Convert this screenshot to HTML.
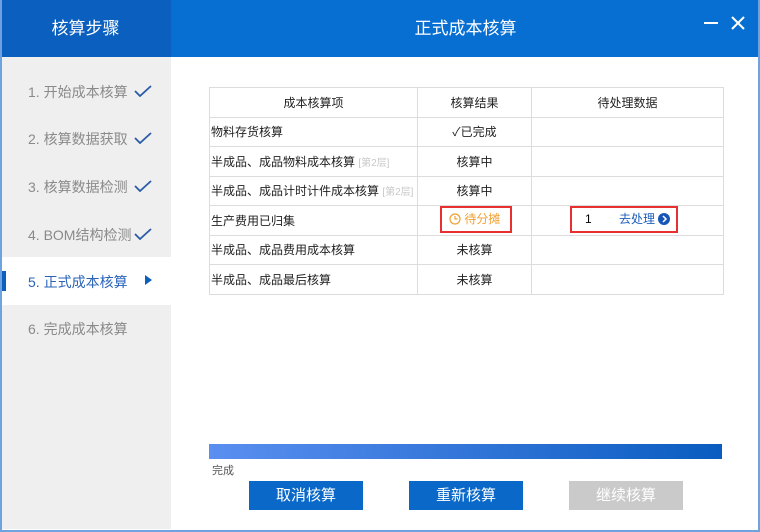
<!DOCTYPE html>
<html><head><meta charset="utf-8"><style>
*{margin:0;padding:0;box-sizing:border-box}
body{width:760px;height:532px;overflow:hidden;background:#fff;font-family:"Liberation Sans","Noto Sans CJK SC",sans-serif;position:relative}
.frame{position:absolute;left:0;top:0;width:760px;height:532px;border:2px solid #6fa3e0;border-top:none}
.hl{position:absolute;left:0;top:0;width:171px;height:57px;background:#0a5fbf;color:#fff;font-size:17px;text-align:center;line-height:57px}
.hr{position:absolute;left:171px;top:0;width:589px;height:57px;background:#086fd2;color:#fff;font-size:17px;text-align:center;line-height:57px}
.side{position:absolute;left:2px;top:57px;width:169px;height:472px;background:#efefef}
.step{position:absolute;left:28px;font-size:14px;color:#8a8a8a;white-space:nowrap}
.ck{position:absolute;left:134px;width:18px;height:12px}
.act{position:absolute;left:2px;top:257px;width:169px;height:48px;background:#fff}
table{position:absolute;left:209px;top:87px;border-collapse:collapse;font-size:12px;color:#222;table-layout:fixed;width:514px}
td{border:1px solid #dcdcdc;height:29.5px;padding:0;white-space:nowrap;overflow:hidden}
td.c{text-align:center}
td.l{padding-left:1px}
.g{color:#c8c8c8;font-size:10px}
.btn{position:absolute;top:481px;width:114px;height:29px;color:#fff;font-size:15px;text-align:center;line-height:29px;background:#0a68c8}
</style></head><body>
<div class="hl">核算步骤</div>
<div class="hr">正式成本核算</div>
<div style="position:absolute;left:704px;top:22px;width:14px;height:2px;background:#fff"></div>
<svg style="position:absolute;left:731px;top:16px" width="14" height="14"><path d="M1 1L13 13M13 1L1 13" stroke="#fff" stroke-width="2"/></svg>
<div class="side"></div>
<div class="act"></div>
<div style="position:absolute;left:2px;top:271px;width:4px;height:20px;background:#0a5fbf"></div>
<div class="step" style="top:82px">1. 开始成本核算</div>
<div class="step" style="top:129px">2. 核算数据获取</div>
<div class="step" style="top:177px">3. 核算数据检测</div>
<div class="step" style="top:225px">4. BOM结构检测</div>
<div class="step" style="top:272px;color:#2a63b8">5. 正式成本核算</div>
<div class="step" style="top:319px">6. 完成成本核算</div>
<svg class="ck" style="top:85px" viewBox="0 0 18 12"><path d="M1 6L6 11L17 1" stroke="#2a5aa8" stroke-width="1.8" fill="none"/></svg>
<svg class="ck" style="top:132px" viewBox="0 0 18 12"><path d="M1 6L6 11L17 1" stroke="#2a5aa8" stroke-width="1.8" fill="none"/></svg>
<svg class="ck" style="top:180px" viewBox="0 0 18 12"><path d="M1 6L6 11L17 1" stroke="#2a5aa8" stroke-width="1.8" fill="none"/></svg>
<svg class="ck" style="top:228px" viewBox="0 0 18 12"><path d="M1 6L6 11L17 1" stroke="#2a5aa8" stroke-width="1.8" fill="none"/></svg>
<svg style="position:absolute;left:145px;top:275px" width="7" height="10"><path d="M0 0L7 5L0 10Z" fill="#0a5fbf"/></svg>
<table>
<colgroup><col style="width:208px"><col style="width:114px"><col style="width:192px"></colgroup>
<tr><td class="c">成本核算项</td><td class="c">核算结果</td><td class="c">待处理数据</td></tr>
<tr><td class="l">物料存货核算</td><td class="c">✓已完成</td><td></td></tr>
<tr><td class="l">半成品、成品物料成本核算 <span class="g">[第2层]</span></td><td class="c">核算中</td><td></td></tr>
<tr><td class="l">半成品、成品计时计件成本核算 <span class="g">[第2层]</span></td><td class="c">核算中</td><td></td></tr>
<tr><td class="l">生产费用已归集</td><td></td><td></td></tr>
<tr><td class="l">半成品、成品费用成本核算</td><td class="c">未核算</td><td></td></tr>
<tr><td class="l">半成品、成品最后核算</td><td class="c">未核算</td><td></td></tr>
</table>
<div style="position:absolute;left:440px;top:206px;width:72px;height:27px;border:2px solid #e8312f;color:#f0a030;font-size:12px;line-height:23px;padding-left:7px">
<svg width="12" height="12" style="vertical-align:-2px"><circle cx="6" cy="6" r="5" stroke="#f0a030" fill="none" stroke-width="1.2"/><path d="M6 3V6H8.5" stroke="#f0a030" fill="none" stroke-width="1.2"/></svg> 待分摊</div>
<div style="position:absolute;left:570px;top:206px;width:108px;height:27px;border:2px solid #e8312f;font-size:12px;line-height:23px">
<span style="position:absolute;left:13px">1</span><span style="position:absolute;left:47px;color:#1f5fb8">去处理</span>
<svg style="position:absolute;left:86px;top:5px" width="12" height="12"><circle cx="6" cy="6" r="6" fill="#1656b8"/><path d="M5 3L8 6L5 9" stroke="#fff" stroke-width="1.5" fill="none"/></svg></div>
<div style="position:absolute;left:209px;top:444px;width:513px;height:15px;background:linear-gradient(90deg,#5a8ff0,#0a5cc0)"></div>
<div style="position:absolute;left:212px;top:462px;font-size:11px;color:#555">完成</div>
<div class="btn" style="left:249px">取消核算</div>
<div class="btn" style="left:409px">重新核算</div>
<div class="btn" style="left:569px;background:#cacaca">继续核算</div>
<div class="frame"></div>
</body></html>
